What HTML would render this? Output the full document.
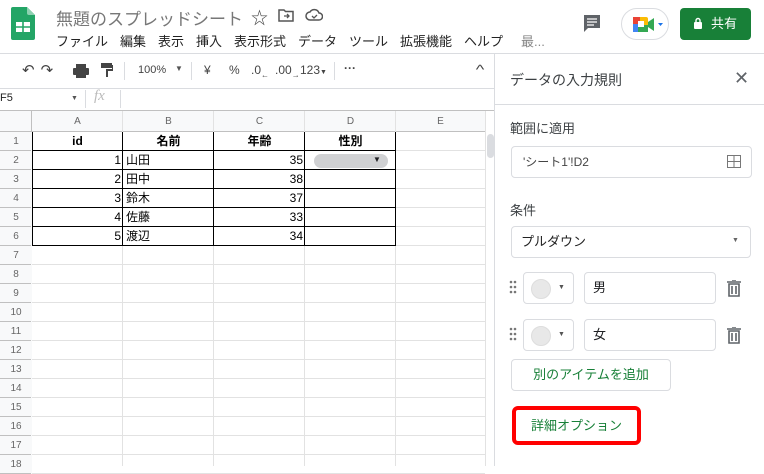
<!DOCTYPE html><html><head><meta charset="utf-8"><style>
*{box-sizing:border-box;margin:0;padding:0}
body{width:764px;height:466px;overflow:hidden;background:#fff;font-family:"Liberation Sans","Noto Sans CJK JP",sans-serif;position:relative;color:#202124}
.a{position:absolute;white-space:nowrap}
.m{position:absolute;top:31px;font-size:13px;color:#222;white-space:nowrap}
.g{position:absolute;background:#e2e2e2}
.rh{position:absolute;left:0;width:32px;text-align:center;font-size:10px;color:#666;background:#f8f9fa}
.ch{position:absolute;top:111px;height:21px;line-height:21px;text-align:center;font-size:10px;color:#666}
.c{position:absolute;font-size:12px;height:19px;line-height:19px;color:#000}
.box{position:absolute;border:1px solid #dadce0;border-radius:4px;background:#fff}
</style></head><body>
<svg class="a" style="left:11px;top:7px" width="24" height="33" viewBox="0 0 24 33"><path d="M2 0h14l8 8v23a2 2 0 0 1-2 2H2a2 2 0 0 1-2-2V2a2 2 0 0 1 2-2z" fill="#23a566"/><path d="M16 0l8 8h-6a2 2 0 0 1-2-2z" fill="#8ed1b1"/><rect x="5" y="15" width="14" height="10" fill="#fff"/><path d="M5 20h14M12 15v10" stroke="#23a566" stroke-width="1.6"/></svg>
<div class="a" style="left:56px;top:5px;font-size:17px;color:#777">無題のスプレッドシート</div>
<div class="a" style="left:251px;top:4px;font-size:17px;color:#444">☆</div>
<svg class="a" style="left:278px;top:8px" width="16" height="14"><path d="M1 2h5l1.5 1.5H15V13H1z" fill="none" stroke="#555" stroke-width="1.5"/><path d="M6 8h5M9 6l2 2-2 2" stroke="#555" stroke-width="1.3" fill="none"/></svg>
<svg class="a" style="left:305px;top:8px" width="18" height="13"><path d="M5 12a4 4 0 0 1 0-8 5 5 0 0 1 9 1 3.5 3.5 0 0 1 0 7z" fill="none" stroke="#555" stroke-width="1.5"/><path d="M7 8l2 2 3-3" stroke="#555" stroke-width="1.3" fill="none"/></svg>
<div class="m" style="left:56px">ファイル</div>
<div class="m" style="left:120px">編集</div>
<div class="m" style="left:158px">表示</div>
<div class="m" style="left:196px">挿入</div>
<div class="m" style="left:234px">表示形式</div>
<div class="m" style="left:298px">データ</div>
<div class="m" style="left:349px">ツール</div>
<div class="m" style="left:400px">拡張機能</div>
<div class="m" style="left:464px">ヘルプ</div>
<div class="a" style="left:521px;top:31px;font-size:13px;color:#888">最...</div>
<svg class="a" style="left:582px;top:13px" width="20" height="20"><path d="M2 2h16v13H6l-4 4z" fill="#5f6368"/><path d="M5 6h10M5 9h10M5 12h7" stroke="#fff" stroke-width="1.3"/></svg>
<div class="a" style="left:621px;top:8px;width:48px;height:32px;border:1px solid #dadce0;border-radius:16px"></div>
<svg class="a" style="left:632px;top:15px" width="32" height="20"><rect x="1" y="2" width="15" height="15" rx="2" fill="#fbbc04"/><rect x="1" y="2" width="7" height="8" fill="#ea4335"/><rect x="1" y="9" width="5" height="8" fill="#4285f4"/><rect x="6" y="10" width="10" height="7" fill="#34a853"/><path d="M16 7l6-4v13l-6-4z" fill="#34a853"/><rect x="6" y="6" width="6" height="6" fill="#fff"/><path d="M26 8h5l-2.5 3z" fill="#1a73e8"/></svg>
<div class="a" style="left:680px;top:8px;width:71px;height:32px;background:#188038;border-radius:4px;color:#fff;font-size:13px;line-height:32px;padding-left:31px">共有</div>
<svg class="a" style="left:693px;top:17px" width="10" height="12"><rect x="1" y="5" width="8" height="7" rx="1" fill="#fff"/><path d="M3 5V3.5a2 2 0 0 1 4 0V5" stroke="#fff" stroke-width="1.4" fill="none"/></svg>
<div class="g" style="left:0;top:53px;width:764px;height:1px;background:#dadce0"></div>
<div class="a" style="left:22px;top:61px;font-size:15px;color:#444;letter-spacing:6px">↶↷</div>
<svg class="a" style="left:73px;top:64px" width="16" height="14"><rect x="3" y="0" width="10" height="4" fill="#444"/><rect x="0" y="4" width="16" height="7" rx="1" fill="#444"/><rect x="3" y="9" width="10" height="5" fill="#444"/></svg>
<svg class="a" style="left:101px;top:63px" width="12" height="15"><rect x="0" y="0" width="11" height="5" fill="#444"/><path d="M11 3h1v4H6v7" stroke="#444" stroke-width="2" fill="none"/></svg>
<div class="g" style="left:124px;top:62px;width:1px;height:18px;background:#dadce0"></div>
<div class="a" style="left:138px;top:64px;font-size:11px;color:#444">100%</div>
<div class="a" style="left:175px;top:64px;font-size:8px;color:#555">▼</div>
<div class="g" style="left:191px;top:62px;width:1px;height:18px;background:#dadce0"></div>
<div class="a" style="left:204px;top:63px;font-size:12px;color:#444">¥</div>
<div class="a" style="left:229px;top:63px;font-size:12px;color:#444">%</div>
<div class="a" style="left:251px;top:63px;font-size:12px;color:#444">.0<sub style="font-size:8px">←</sub></div>
<div class="a" style="left:275px;top:63px;font-size:12px;color:#444">.00<sub style="font-size:8px">→</sub></div>
<div class="a" style="left:300px;top:63px;font-size:12px;color:#444">123<span style="font-size:7px">▼</span></div>
<div class="g" style="left:334px;top:62px;width:1px;height:18px;background:#dadce0"></div>
<div class="a" style="left:344px;top:61px;font-size:12px;color:#444;font-weight:bold">···</div>
<div class="a" style="left:477px;top:62px;font-size:13px;color:#444;transform:scaleX(1.4)">^</div>
<div class="g" style="left:0;top:88px;width:495px;height:1px;background:#dadce0"></div>
<div class="a" style="left:0;top:92px;font-size:11px;color:#222">F5</div>
<div class="a" style="left:71px;top:95px;font-size:7px;color:#555">▼</div>
<div class="g" style="left:85px;top:90px;width:1px;height:18px;background:#dadce0"></div>
<div class="a" style="left:94px;top:88px;font-size:15px;color:#bbb;font-style:italic;font-family:'Liberation Serif',serif">fx</div>
<div class="g" style="left:120px;top:90px;width:1px;height:18px;background:#dadce0"></div>
<div class="g" style="left:0;top:110px;width:495px;height:1px;background:#c0c0c0"></div>
<div class="a" style="left:0;top:111px;width:32px;height:355px;background:#f8f9fa"></div>
<div class="a" style="left:0;top:111px;width:485px;height:21px;background:#f8f9fa"></div>
<div class="g" style="left:31px;top:111px;width:1px;height:355px;background:#c0c0c0"></div>
<div class="g" style="left:0;top:131px;width:485px;height:1px;background:#c0c0c0"></div>
<div class="ch" style="left:32px;width:91px">A</div>
<div class="ch" style="left:123px;width:91px">B</div>
<div class="ch" style="left:214px;width:91px">C</div>
<div class="ch" style="left:305px;width:91px">D</div>
<div class="ch" style="left:396px;width:89px">E</div>
<div class="g" style="left:122px;top:111px;width:1px;height:355px"></div>
<div class="g" style="left:213px;top:111px;width:1px;height:355px"></div>
<div class="g" style="left:304px;top:111px;width:1px;height:355px"></div>
<div class="g" style="left:395px;top:111px;width:1px;height:355px"></div>
<div class="g" style="left:485px;top:111px;width:1px;height:355px"></div>
<div class="a" style="left:486px;top:111px;width:8px;height:355px;background:#fff"></div>
<div class="a" style="left:487px;top:134px;width:7px;height:24px;background:#dadce0;border-radius:4px"></div>
<div class="g" style="left:494px;top:54px;width:1px;height:412px;background:#dadce0"></div>
<div id="rows"></div>
<div class="a" style="left:32px;top:132px;width:364px;height:114px;border:1px solid #000;border-top:none"></div>
<div class="a" style="left:122px;top:132px;width:1px;height:114px;background:#000"></div>
<div class="a" style="left:213px;top:132px;width:1px;height:114px;background:#000"></div>
<div class="a" style="left:304px;top:132px;width:1px;height:114px;background:#000"></div>
<div class="c" style="left:32px;top:132px;width:91px;text-align:center;font-weight:bold">id</div>
<div class="c" style="left:123px;top:132px;width:91px;text-align:center;font-weight:bold">名前</div>
<div class="c" style="left:214px;top:132px;width:91px;text-align:center;font-weight:bold">年齢</div>
<div class="c" style="left:305px;top:132px;width:91px;text-align:center;font-weight:bold">性別</div>
<div class="a" style="left:314px;top:154px;width:74px;height:14px;background:#d0d1d3;border-radius:7px"></div>
<div class="a" style="left:373px;top:155px;font-size:8px">▼</div>
<div class="a" style="left:510px;top:70px;font-size:14px;color:#3c4043">データの入力規則</div>
<div class="a" style="left:734px;top:68px;font-size:18px;color:#5f6368">✕</div>
<div class="g" style="left:495px;top:104px;width:269px;height:1px;background:#dadce0"></div>
<div class="a" style="left:510px;top:118px;font-size:13px;color:#3c4043">範囲に適用</div>
<div class="box" style="left:511px;top:146px;width:241px;height:32px;font-size:12px;line-height:30px;padding-left:11px;color:#444">'シート1'!D2</div>
<svg class="a" style="left:727px;top:155px" width="14" height="13"><rect x=".5" y=".5" width="13" height="12" fill="none" stroke="#777"/><path d="M7 0v13M0 6.5h14" stroke="#777"/></svg>
<div class="a" style="left:510px;top:200px;font-size:13px;color:#3c4043">条件</div>
<div class="box" style="left:511px;top:226px;width:240px;height:32px;font-size:13px;line-height:30px;padding-left:9px;color:#222">プルダウン</div>
<div class="a" style="left:732px;top:237px;font-size:7px;color:#666">▼</div>
<svg class="a" style="left:509px;top:280px" width="8" height="15"><g fill="#777"><circle cx="2" cy="2" r="1.3"/><circle cx="6" cy="2" r="1.3"/><circle cx="2" cy="7" r="1.3"/><circle cx="6" cy="7" r="1.3"/><circle cx="2" cy="12" r="1.3"/><circle cx="6" cy="12" r="1.3"/></g></svg>
<svg class="a" style="left:509px;top:327px" width="8" height="15"><g fill="#777"><circle cx="2" cy="2" r="1.3"/><circle cx="6" cy="2" r="1.3"/><circle cx="2" cy="7" r="1.3"/><circle cx="6" cy="7" r="1.3"/><circle cx="2" cy="12" r="1.3"/><circle cx="6" cy="12" r="1.3"/></g></svg>
<div class="box" style="left:523px;top:272px;width:51px;height:32px"></div>
<div class="box" style="left:523px;top:319px;width:51px;height:32px"></div>
<div class="a" style="left:531px;top:279px;width:20px;height:20px;border-radius:50%;background:#e8e8e8;border:1px solid #ddd"></div>
<div class="a" style="left:531px;top:326px;width:20px;height:20px;border-radius:50%;background:#e8e8e8;border:1px solid #ddd"></div>
<div class="a" style="left:558px;top:284px;font-size:7px;color:#555">▼</div>
<div class="a" style="left:558px;top:331px;font-size:7px;color:#555">▼</div>
<div class="box" style="left:584px;top:272px;width:132px;height:32px;font-size:13px;line-height:30px;padding-left:8px">男</div>
<div class="box" style="left:584px;top:319px;width:132px;height:32px;font-size:13px;line-height:30px;padding-left:8px">女</div>
<svg class="a" style="left:727px;top:280px" width="14" height="17"><path d="M0 2h14M5 0h4M2 4h10v12H2z M5 6v8M9 6v8" stroke="#5f6368" stroke-width="1.6" fill="none"/></svg>
<svg class="a" style="left:727px;top:327px" width="14" height="17"><path d="M0 2h14M5 0h4M2 4h10v12H2z M5 6v8M9 6v8" stroke="#5f6368" stroke-width="1.6" fill="none"/></svg>
<div class="box" style="left:511px;top:359px;width:160px;height:32px;font-size:13px;line-height:30px;text-align:center;color:#188038">別のアイテムを追加</div>
<div class="a" style="left:512px;top:406px;width:129px;height:39px;border:4px solid #f00;border-radius:6px;font-size:13px;line-height:31px;text-align:center;color:#188038">詳細オプション</div>
<script>
var h='';for(var i=1;i<=18;i++){var t=132+(i-1)*19;h+='<div class="rh" style="top:'+t+'px;height:19px;line-height:19px">'+i+'</div>';if(i>6)h+='<div class="g" style="left:32px;top:'+(t+18)+'px;width:453px;height:1px"></div>';else h+='<div class="g" style="left:396px;top:'+(t+18)+'px;width:89px;height:1px"></div>';h+='<div class="g" style="left:0;top:'+(t+18)+'px;width:31px;height:1px;background:#c0c0c0"></div>';}
document.getElementById('rows').innerHTML=h;
var d=[[1,'山田',35],[2,'田中',38],[3,'鈴木',37],[4,'佐藤',33],[5,'渡辺',34]],s='';
d.forEach(function(r,k){var t=151+k*19;s+='<div class="c" style="left:32px;top:'+t+'px;width:89px;text-align:right">'+r[0]+'</div><div class="c" style="left:126px;top:'+t+'px">'+r[1]+'</div><div class="c" style="left:214px;top:'+t+'px;width:89px;text-align:right">'+r[2]+'</div>';if(k<4)s+='<div class="a" style="left:32px;top:'+(t+18)+'px;width:364px;height:1px;background:#000"></div>';});
s+='<div class="a" style="left:32px;top:150px;width:364px;height:1px;background:#000"></div>';
document.body.insertAdjacentHTML('beforeend',s);
</script>
</body></html>
